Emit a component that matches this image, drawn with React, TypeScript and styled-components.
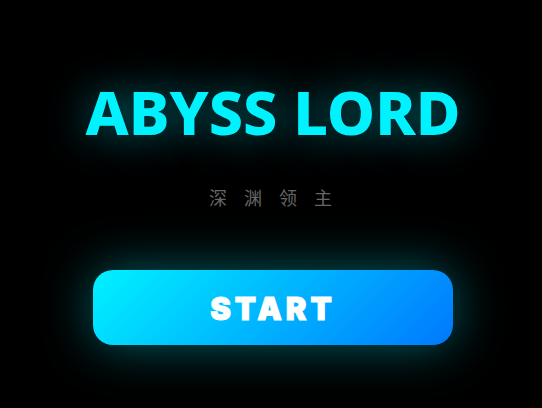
import React from "react";
import styled, { createGlobalStyle } from "styled-components";

const GlobalStyle = createGlobalStyle`
  * { box-sizing: border-box; }
  body { margin: 0; background: #000; }
`;

const Screen = styled.main`
  min-height: 100vh;
  display: flex;
  flex-direction: column;
  align-items: center;
  justify-content: center;
  padding: 6px 16px 0 20px;
  background: #000;
`;

const Title = styled.h1`
  margin: 0;
  font: 800 61px/84px "Noto Sans", sans-serif;
  color: #00f2ff;
  text-shadow: 0 0 40px rgba(0, 242, 255, 0.5);
  white-space: nowrap;
`;

const Subtitle = styled.p`
  margin: 31px -12px 61px 0;
  font: 400 18px/24px "Noto Sans CJK SC", sans-serif;
  letter-spacing: 17px;
  color: #666;
`;

const StartButton = styled.button`
  width: 100%;
  max-width: 360px;
  height: 75px;
  padding: 4px 0 0;
  border: 0;
  border-radius: 20px;
  background: linear-gradient(135deg, #00f2ff, #0078ff);
  box-shadow: 0 0 50px rgba(0, 242, 255, 0.4);
  color: #fff;
  font: 900 31px/40px Inter, sans-serif;
  letter-spacing: 4px;
  -webkit-text-stroke: 1px #fff;
  cursor: pointer;
`;

export default function App() {
  return (
    <>
      <GlobalStyle />
      <Screen>
        <Title>ABYSS LORD</Title>
        <Subtitle lang="zh-CN">深渊领主</Subtitle>
        <StartButton type="button">START</StartButton>
      </Screen>
    </>
  );
}
